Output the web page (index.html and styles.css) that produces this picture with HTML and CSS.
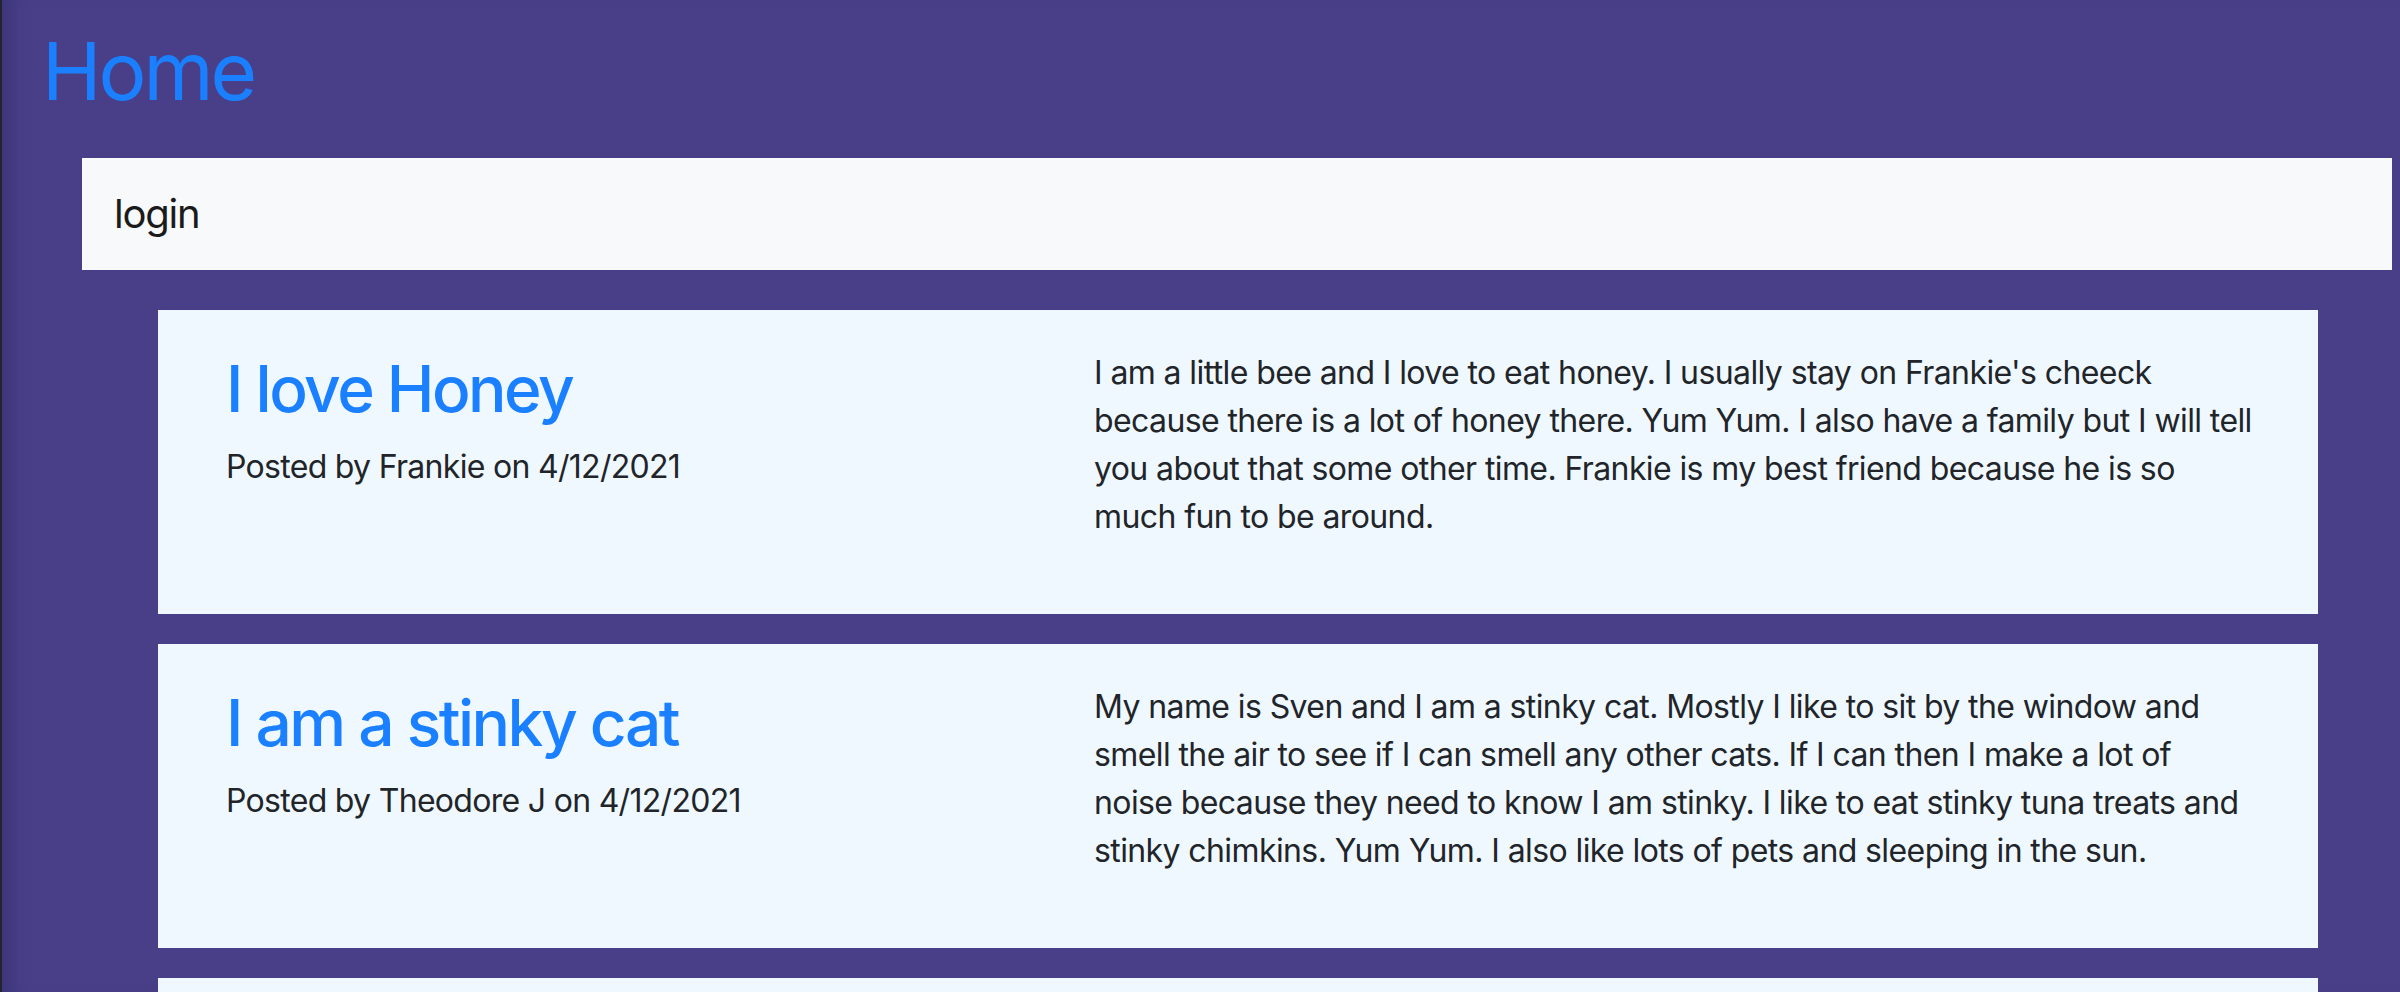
FILE: index.html
```html
<!DOCTYPE html>
<html lang="en">
<head>
<meta charset="utf-8">
<title>Home</title>
<link rel="stylesheet" href="styles.css">
</head>
<body>
<div class="page">
  <h1 class="page-title">Home</h1>
  <nav class="navbar">
    <a class="navbar-brand">login</a>
  </nav>
  <main class="posts">
    <article class="post">
      <div class="post-head">
        <h2 class="post-title">I love Honey</h2>
        <p class="post-meta">Posted by Frankie on 4/12/2021</p>
      </div>
      <div class="post-body">
        <p>I am a little bee and I love to eat honey. I usually stay on Frankie's cheeck<br>because there is a lot of honey there. Yum Yum. I also have a family but I will tell<br>you about that some other time. Frankie is my best friend because he is so<br>much fun to be around.</p>
      </div>
    </article>
    <article class="post">
      <div class="post-head">
        <h2 class="post-title">I am a stinky cat</h2>
        <p class="post-meta">Posted by Theodore J on 4/12/2021</p>
      </div>
      <div class="post-body">
        <p>My name is Sven and I am a stinky cat. Mostly I like to sit by the window and<br>smell the air to see if I can smell any other cats. If I can then I make a lot of<br>noise because they need to know I am stinky. I like to eat stinky tuna treats and<br>stinky chimkins. Yum Yum. I also like lots of pets and sleeping in the sun.</p>
      </div>
    </article>
    <article class="post">
      <div class="post-head">
        <h2 class="post-title">&nbsp;</h2>
      </div>
      <div class="post-body"></div>
    </article>
  </main>
</div>
</body>
</html>
```

FILE: styles.css
```css
* { box-sizing: border-box; }

html, body {
  margin: 0;
  padding: 0;
}

body {
  background: #483f88;
  font-family: Inter, "Noto Sans", sans-serif;
  color: #212529;
  overflow: hidden;
  height: 992px;
}

.page {
  height: 992px;
  border-left: 2px solid #1f2632;
  box-shadow: inset 24px 0 24px -20px rgba(30, 25, 70, 0.35);
}

.page-title {
  margin: 0;
  padding: 23px 0 0 40px;
  font-size: 80px;
  line-height: 96px;
  font-weight: 400;
  color: #1a80ff;
  letter-spacing: -3px;
}

.navbar {
  display: flex;
  align-items: center;
  height: 112px;
  margin: 39px 8px 0 80px;
  padding: 0 32px;
  background: #f8f9fa;
}

.navbar-brand {
  font-size: 40px;
  line-height: 60px;
  color: #1b1b1b;
  letter-spacing: -1.2px;
}

.posts {
  display: flex;
  flex-direction: column;
  gap: 30px;
  margin: 40px 82px 0 156px;
}

.post {
  display: grid;
  grid-template-columns: 868px 1fr;
  height: 304px;
  flex-shrink: 0;
  padding: 41px 40px 0 68px;
  background: #f0f8ff;
}

.post-title {
  margin: 0 0 15px;
  font-size: 64px;
  line-height: 76.8px;
  font-weight: 500;
  color: #1a80ff;
  letter-spacing: -2.5px;
}

.post-meta {
  margin: 0;
  font-size: 32px;
  line-height: 48px;
  letter-spacing: -0.7px;
}

.post-body p {
  margin: -2px 0 0;
  font-size: 32px;
  line-height: 48px;
  letter-spacing: -0.6px;
}
```
